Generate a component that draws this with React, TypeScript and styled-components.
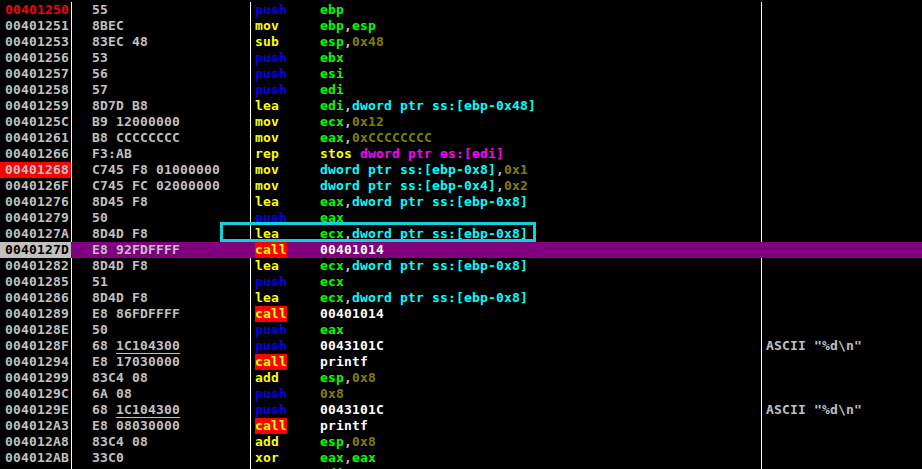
import React from 'react'
import styled, { createGlobalStyle } from 'styled-components'

const GlobalStyle = createGlobalStyle`
  html, body {
    margin: 0;
    padding: 0;
    background: #000;
  }
`

const Listing = styled.div`
  width: 922px;
  height: 469px;
  overflow: hidden;
  box-sizing: border-box;
  padding-top: 2px;
  background: #000;
  font-family: "DejaVu Sans Mono", monospace;
  font-weight: 700;
  font-size: 13px;
  letter-spacing: 0.17px;
  color: #c0c0c0;
  white-space: pre;
`

const Row = styled.div<{ $current?: boolean }>`
  display: grid;
  grid-template-columns: 71px 179px 511px 161px;
  height: 16px;
  line-height: 16px;
  background: ${p => (p.$current ? '#800080' : 'transparent')};
`

const Addr = styled.div<{ $mark?: Mark }>`
  padding-left: 5px;
  color: ${p => (p.$mark === 'eip' ? '#ff0000' : p.$mark === 'cur' ? '#000' : '#c0c0c0')};
  background: ${p => (p.$mark === 'bp' ? '#ff0000' : p.$mark === 'cur' ? '#c0c0c0' : 'transparent')};
`

const Hex = styled.div<{ $current?: boolean }>`
  padding-left: 20px;
  border-left: 1px solid ${p => (p.$current ? 'transparent' : '#fff')};
`

const Reloc = styled.span`
  display: inline-block;
  height: 16px;
  box-shadow: inset 0 -1px 0 #c0c0c0;
`

const Disasm = styled.div<{ $current?: boolean }>`
  position: relative;
  display: flex;
  height: 16px;
  padding-left: 4px;
  border-left: 1px solid ${p => (p.$current ? 'transparent' : '#fff')};
`

const Mnemonic = styled.span<{ $color: string; $call: boolean }>`
  width: 32px;
  margin-right: 33px;
  color: ${p => p.$color};
  background: ${p => (p.$call ? '#ff0000' : 'transparent')};
`

const Args = styled.span`
  display: inline-block;
`

const Arg = styled.span<{ $color?: string }>`
  color: ${p => p.$color};
`

const SelectBox = styled.div`
  position: absolute;
  left: -31px;
  top: -4px;
  width: 316px;
  height: 20px;
  box-sizing: border-box;
  border: 3px solid #14d0d8;
  pointer-events: none;
`

const Comment = styled.div<{ $current?: boolean }>`
  padding-left: 4px;
  border-left: 1px solid ${p => (p.$current ? 'transparent' : '#fff')};
`

type Mark = 'eip' | 'bp' | 'cur'

type Tok = { t: string; c?: string }

type Line = {
  addr: string
  hex: React.ReactNode
  op: string
  args: Tok[]
  note?: string
  addrMark?: Mark
}

const dw = (s: string): Tok => ({ t: s, c: '#00ffff' })
const reg = (s: string): Tok => ({ t: s, c: '#00ff00' })
const num = (s: string): Tok => ({ t: s, c: '#808000' })
const lit = (s: string): Tok => ({ t: s, c: '#ffffff' })
const comma: Tok = { t: ',', c: '#c0c0c0' }

const EBP8 = 'dword ptr ss:[ebp-0x8]'

const lines: Line[] = [
  { addr: '00401250', hex: '55', op: 'push', args: [reg('ebp')], addrMark: 'eip' },
  { addr: '00401251', hex: '8BEC', op: 'mov', args: [reg('ebp'), comma, reg('esp')] },
  { addr: '00401253', hex: '83EC 48', op: 'sub', args: [reg('esp'), comma, num('0x48')] },
  { addr: '00401256', hex: '53', op: 'push', args: [reg('ebx')] },
  { addr: '00401257', hex: '56', op: 'push', args: [reg('esi')] },
  { addr: '00401258', hex: '57', op: 'push', args: [reg('edi')] },
  { addr: '00401259', hex: '8D7D B8', op: 'lea', args: [reg('edi'), comma, dw('dword ptr ss:[ebp-0x48]')] },
  { addr: '0040125C', hex: 'B9 12000000', op: 'mov', args: [reg('ecx'), comma, num('0x12')] },
  { addr: '00401261', hex: 'B8 CCCCCCCC', op: 'mov', args: [reg('eax'), comma, num('0xCCCCCCCC')] },
  { addr: '00401266', hex: 'F3:AB', op: 'rep', args: [{ t: 'stos ', c: '#ffff00' }, { t: 'dword ptr es:[edi]', c: '#ff00ff' }] },
  { addr: '00401268', hex: 'C745 F8 01000000', op: 'mov', args: [dw(EBP8), comma, num('0x1')], addrMark: 'bp' },
  { addr: '0040126F', hex: 'C745 FC 02000000', op: 'mov', args: [dw('dword ptr ss:[ebp-0x4]'), comma, num('0x2')] },
  { addr: '00401276', hex: '8D45 F8', op: 'lea', args: [reg('eax'), comma, dw(EBP8)] },
  { addr: '00401279', hex: '50', op: 'push', args: [reg('eax')] },
  { addr: '0040127A', hex: '8D4D F8', op: 'lea', args: [reg('ecx'), comma, dw(EBP8)] },
  { addr: '0040127D', hex: 'E8 92FDFFFF', op: 'call', args: [lit('00401014')], addrMark: 'cur' },
  { addr: '00401282', hex: '8D4D F8', op: 'lea', args: [reg('ecx'), comma, dw(EBP8)] },
  { addr: '00401285', hex: '51', op: 'push', args: [reg('ecx')] },
  { addr: '00401286', hex: '8D4D F8', op: 'lea', args: [reg('ecx'), comma, dw(EBP8)] },
  { addr: '00401289', hex: 'E8 86FDFFFF', op: 'call', args: [lit('00401014')] },
  { addr: '0040128E', hex: '50', op: 'push', args: [reg('eax')] },
  { addr: '0040128F', hex: <>68 <Reloc>1C104300</Reloc></>, op: 'push', args: [lit('0043101C')], note: 'ASCII "%d\\n"' },
  { addr: '00401294', hex: 'E8 17030000', op: 'call', args: [lit('printf')] },
  { addr: '00401299', hex: '83C4 08', op: 'add', args: [reg('esp'), comma, num('0x8')] },
  { addr: '0040129C', hex: '6A 08', op: 'push', args: [num('0x8')] },
  { addr: '0040129E', hex: <>68 <Reloc>1C104300</Reloc></>, op: 'push', args: [lit('0043101C')], note: 'ASCII "%d\\n"' },
  { addr: '004012A3', hex: 'E8 08030000', op: 'call', args: [lit('printf')] },
  { addr: '004012A8', hex: '83C4 08', op: 'add', args: [reg('esp'), comma, num('0x8')] },
  { addr: '004012AB', hex: '33C0', op: 'xor', args: [reg('eax'), comma, reg('eax')] },
  // next row is cut by the window, only the top of the operand shows
  { addr: '', hex: '', op: '', args: [reg('edi')] },
]

const opColor = (op: string) => (op === 'push' ? '#0000ff' : '#ffff00')

export default function App() {
  return (
    <Listing>
      <GlobalStyle />
      {lines.map((l, n) => {
        const current = l.addrMark === 'cur'
        return (
          <Row key={n} $current={current}>
            <Addr $mark={l.addrMark}>{l.addr}</Addr>
            <Hex $current={current}>{l.hex}</Hex>
            <Disasm $current={current}>
              <Mnemonic $color={opColor(l.op)} $call={l.op === 'call'}>{l.op}</Mnemonic>
              <Args>
                {l.args.map((a, i) => (
                  <Arg key={i} $color={a.c}>{a.t}</Arg>
                ))}
              </Args>
              {l.addr === '0040127A' && <SelectBox />}
            </Disasm>
            <Comment $current={current}>{l.note}</Comment>
          </Row>
        )
      })}
    </Listing>
  )
}
